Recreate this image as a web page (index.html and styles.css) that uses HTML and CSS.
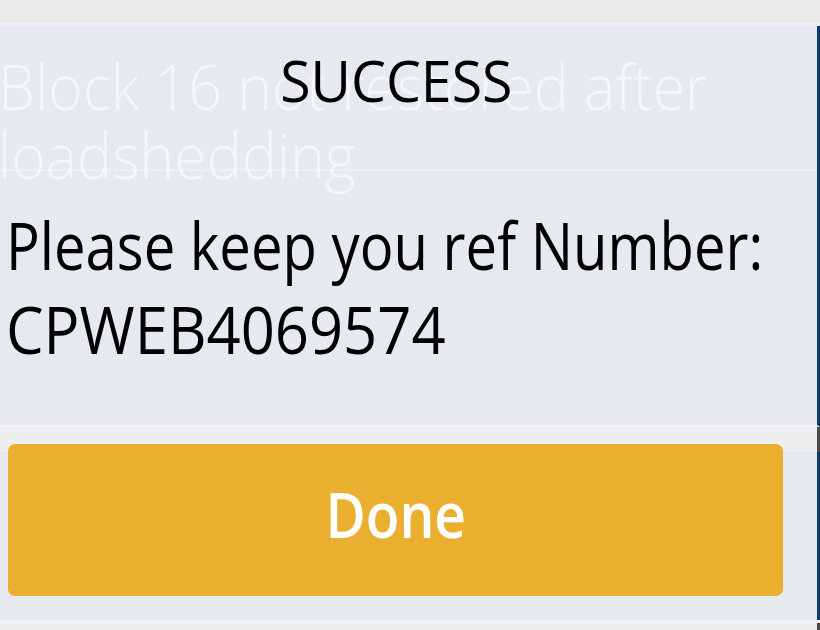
FILE: index.html
```html
<!DOCTYPE html>
<html lang="en">

<head>
    <meta charset="UTF-8">
    <meta name="viewport" content="width=device-width, initial-scale=1.0">
    <title>Success</title>
    <link rel="stylesheet" href="styles.css">
</head>

<body>
    <div class="topbar"></div>

    <main class="dialog">
        <section class="dialog-body">
            <div class="backdrop-text">
                <span>Block 16 not restored after<br>loadshedding</span>
            </div>
            <h1 class="title"><span>SUCCESS</span></h1>
            <p class="message">
                <span>Please keep you ref Number:</span><br>
                <span class="ref">CPWEB4069574</span>
            </p>
        </section>

        <footer class="dialog-foot">
            <button class="done-btn"><span>Done</span></button>
        </footer>
    </main>

    <div class="bottombar"></div>
</body>

</html>
```

FILE: styles.css
```css
html,
body {
    margin: 0;
    width: 820px;
    height: 630px;
    overflow: hidden;
}

body {
    font-family: 'Open Sans', 'DejaVu Sans', sans-serif;
    background-color: #e6e9ee;
}

.topbar {
    height: 23px;
    background-color: #ebebeb;
    border-bottom: 3px solid #f1f0f5;
}

.dialog-body {
    position: relative;
    height: 401px;
    box-sizing: border-box;
    padding-top: 26px;
    background:
        linear-gradient(#eff0f2, #eff0f2) 0 143px / 100% 2px no-repeat,
        #e6e9ee;
    border-right: 3px solid #10386a;
    border-bottom: 2px solid #f2f2f4;
    overflow: hidden;
}

/* page text that shows through the dialog */
.backdrop-text {
    position: absolute;
    top: 25px;
    left: -2px;
    font-size: 63px;
    font-weight: 300;
    line-height: 69px;
    color: rgba(255, 255, 255, 0.6);
    white-space: nowrap;
}

.backdrop-text span {
    display: inline-block;
    transform: scaleX(0.935);
    transform-origin: left;
}

.title {
    position: relative;
    margin: 0;
    padding-right: 25px;
    font-size: 56px;
    font-weight: 400;
    line-height: 56px;
    text-align: center;
    color: #000;
}

.title span {
    display: inline-block;
    transform: scaleX(0.99);
}

.message {
    position: relative;
    margin: 94px 0 0;
    padding-left: 6px;
    font-size: 66px;
    line-height: 84px;
    color: #000;
    white-space: nowrap;
}

.message span {
    display: inline-block;
    transform: scaleX(0.852);
    transform-origin: left;
}

.message .ref {
    transform: scaleX(0.905);
}

.dialog-foot {
    height: 193px;
    box-sizing: border-box;
    padding: 17px 37px 0 8px;
    background:
        linear-gradient(#4a4a4a, #4a4a4a) right top / 3px 25px no-repeat,
        linear-gradient(#10386a, #10386a) right 25px / 3px 100% no-repeat,
        linear-gradient(#eeeeee, #eeeeee) left top / 100% 25px no-repeat,
        #e6e9ee;
}

.done-btn {
    display: flex;
    align-items: center;
    justify-content: center;
    width: 100%;
    height: 152px;
    padding: 0 0 14px;
    border: none;
    border-radius: 7px;
    background-color: #ebaf2f;
    color: #fff;
    font-family: inherit;
    font-size: 64px;
    font-weight: 600;
}

.done-btn span {
    display: inline-block;
    transform: scaleX(0.86);
}

.bottombar {
    height: 7px;
    border-top: 3px solid #f2f2f4;
    background:
        linear-gradient(#4a4a4a, #4a4a4a) right top / 3px 100% no-repeat,
        #ececec;
}
```
